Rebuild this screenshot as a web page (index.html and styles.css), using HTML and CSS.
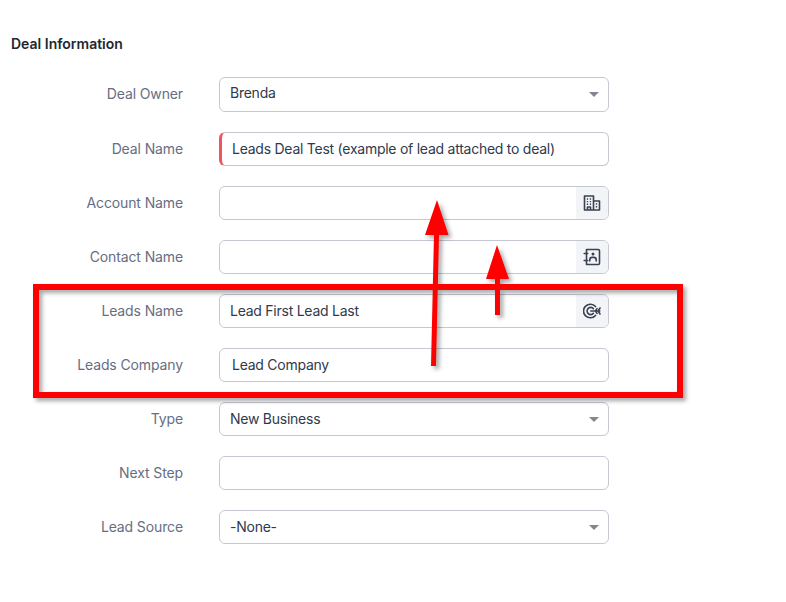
FILE: index.html
```html
<!DOCTYPE html>
<html lang="en">
<head>
<meta charset="utf-8">
<title>Deal Information</title>
<link rel="stylesheet" href="styles.css">
</head>
<body>
<main class="page">
  <h2 class="title">Deal Information</h2>
  <form class="form">
    <div class="row row-first">
      <span class="label">Deal Owner</span>
      <div class="field select"><span class="value">Brenda</span><i class="caret"></i></div>
    </div>
    <div class="row">
      <span class="label">Deal Name</span>
      <div class="field required"><span class="value">Leads Deal Test (example of lead attached to deal)</span></div>
    </div>
    <div class="row">
      <span class="label">Account Name</span>
      <div class="field">
        <span class="value"></span>
        <span class="addon">
          <svg class="icon" viewBox="0 0 18 18"><path d="M1.500 16V2h9v14M1.500 16h15V7h-6M4.500 16v-3h3v3"/><path class="dots" d="M3.800 5h1.300M6.800 5h1.300M3.800 7.600h1.300M6.800 7.600h1.300M3.800 10.200h1.300M6.800 10.200h1.300M12.800 10h1.400M12.800 12.700h1.400"/></svg>
        </span>
      </div>
    </div>
    <div class="row">
      <span class="label">Contact Name</span>
      <div class="field">
        <span class="value"></span>
        <span class="addon">
          <svg class="icon" viewBox="0 0 18 18"><path d="M3.500 1.500h11.700a1.300 1.300 0 0 1 1.300 1.300v12.400a1.300 1.300 0 0 1-1.300 1.300H3.500V1.500zM1.200 5.500h3.500M1.200 12.500h3.500"/><circle cx="10" cy="6" r="1.500" class="solid"/><path d="M6.800 13v-1.300a2.300 2.300 0 0 1 2.300-2.300h1.800a2.300 2.300 0 0 1 2.300 2.300V13"/></svg>
        </span>
      </div>
    </div>
    <div class="row">
      <span class="label">Leads Name</span>
      <div class="field lookup">
        <span class="value">Lead First Lead Last</span>
        <span class="addon">
          <svg class="icon" viewBox="0 0 18 18"><path d="M12.500 4.600A6.800 6.800 0 1 0 12.500 13.400"/><path d="M10.400 6.600a3.600 3.600 0 1 0 0 4.800"/><path d="M7.800 9h9M14 6.600 12.400 9l1.600 2.400M17 6 15.200 9l1.800 3"/></svg>
        </span>
      </div>
    </div>
    <div class="row">
      <span class="label">Leads Company</span>
      <div class="field"><span class="value">Lead Company</span></div>
    </div>
    <div class="row">
      <span class="label">Type</span>
      <div class="field select"><span class="value">New Business</span><i class="caret"></i></div>
    </div>
    <div class="row">
      <span class="label">Next Step</span>
      <div class="field"><span class="value"></span></div>
    </div>
    <div class="row">
      <span class="label">Lead Source</span>
      <div class="field select"><span class="value">-None-</span><i class="caret"></i></div>
    </div>
  </form>
  <svg class="markup" viewBox="0 0 786 602" width="786" height="602">
    <rect class="box" x="36" y="287" width="644" height="108"/>
    <polygon class="arrow" points="437,200 448.500,235 439,235 436,366 431,366 434,235 425,235"/>
    <polygon class="arrow" points="497,245 509,279 500,279 500,315 495,315 495,279 486,279"/>
  </svg>
</main>
</body>
</html>
```

FILE: styles.css
```css
* { box-sizing: border-box; }
html, body { margin: 0; padding: 0; background: #fff; }
body { font-family: "Inter", "Liberation Sans", sans-serif; font-size: 14px; letter-spacing: -0.25px; overflow: hidden; }
.page { position: relative; width: 786px; height: 602px; padding: 35px 0 0 11px; }
.title { margin: 0 0 25px; font-size: 14px; line-height: 17px; font-weight: 600; letter-spacing: 0; color: #22262e; }
.form { display: flex; flex-direction: column; gap: 20px; }
.row { display: flex; align-items: center; height: 34px; }
.row-first { height: 35px; }
.label { width: 172px; margin: 0 36px 2px 0; text-align: right; letter-spacing: -0.12px; color: #666e82; }
.field { position: relative; display: flex; align-items: stretch; width: 390px; height: 100%; border: 1px solid #c5c8d1; border-radius: 6px; background: #fff; color: #2f3a4d; overflow: hidden; }
.value { flex: 1; padding-left: 12px; line-height: 31px; }
.select .value, .lookup .value { padding-left: 10px; }
.row-first .value { line-height: 29px; }
.required { border-left: 3px solid #f2545b; }
.required .value { padding-left: 10px; }
.caret { position: absolute; right: 9px; top: 14px; width: 0; height: 0; border-left: 5px solid transparent; border-right: 5px solid transparent; border-top: 5px solid #83868f; }
.addon { display: flex; align-items: center; justify-content: center; width: 32px; background: #f3f4f7; }
.icon { width: 18px; height: 18px; fill: none; stroke: #3a4152; stroke-width: 1.600; stroke-linecap: round; stroke-linejoin: round; }
.icon .solid { fill: #3a4152; stroke: none; }
.icon .dots { stroke-width: 1.400; stroke-linecap: butt; }
.markup { position: absolute; left: 0; top: 0; pointer-events: none; filter: drop-shadow(3px 3px 2px rgba(0, 0, 0, 0.35)); }
.box { fill: none; stroke: #ff0000; stroke-width: 6; }
.arrow { fill: #ff0000; }
```
